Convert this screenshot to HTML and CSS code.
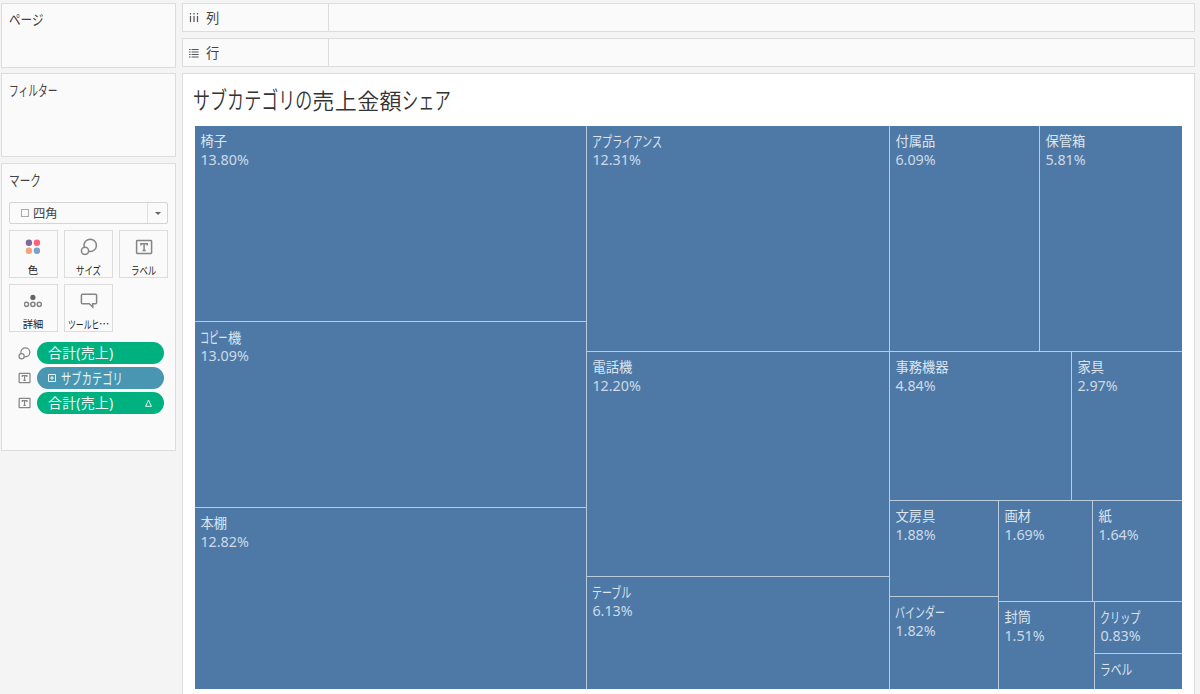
FILE: index.html
```html
<!DOCTYPE html>
<html lang="ja">
<head>
<meta charset="utf-8">
<title>サブカテゴリの売上金額シェア</title>
<link rel="stylesheet" href="styles.css">
</head>
<body>
<svg class="defs" width="0" height="0">
  <symbol id="size" viewBox="0 0 18 18"><circle cx="10.2" cy="7.4" r="6.2" /><circle class="mask" cx="5" cy="12.8" r="3.6"/></symbol>
  <symbol id="label" viewBox="0 0 18 16"><rect x="1.6" y="1.6" width="15" height="12.8" rx=".6"/><path d="M5.9 6.5V4.8H12.3V6.5M9.1 4.8V11.4M7.5 11.4H10.7"/></symbol>
</svg>
<aside class="cards">
  <section class="card pages"><h2><span class="k n3 pg">ページ</span></h2></section>
  <section class="card filters"><h2><span class="k n5 fl">フィルター</span></h2></section>
  <section class="card marks">
    <h2><span class="k n3 mk">マーク</span></h2>
    <div class="select"><i class="square"></i><span class="value">四角</span><span class="drop"><i></i></span></div>
    <div class="buttons">
      <div class="btn first"><svg width="18" height="18" viewBox="0 0 18 18"><g stroke="none"><circle cx="4.9" cy="4.8" r="3.2" fill="#7d6b99"/><circle cx="12.9" cy="4.8" r="3.2" fill="#f9647b"/><circle cx="4.9" cy="12.8" r="3.2" fill="#f7a277"/><circle cx="12.9" cy="12.8" r="3.2" fill="#78a1cc"/></g></svg><span>色</span></div>
      <div class="btn"><svg width="18" height="18"><use href="#size"/></svg><span class="k n3 bt">サイズ</span></div>
      <div class="btn"><svg width="18" height="18"><use href="#label"/></svg><span class="k n3 bt">ラベル</span></div>
      <div class="btn first"><svg width="18" height="18" viewBox="0 0 18 18"><circle cx="8.9" cy="5.4" r="2.6" fill="#666" stroke="none"/><circle cx="2.5" cy="12.3" r="2.1"/><circle cx="8.9" cy="12.3" r="2.1"/><circle cx="15.3" cy="12.3" r="2.1"/></svg><span>詳細</span></div>
      <div class="btn"><svg width="18" height="18" viewBox="0 0 18 18"><path d="M2.4 2.2H15.6Q16.6 2.2 16.6 3.2V10.8Q16.6 11.8 15.6 11.8H12.7V15L9.3 11.8H2.4Q1.4 11.8 1.4 10.8V3.2Q1.4 2.2 2.4 2.2Z"/></svg><span class="tip"><span class="k n4 tt">ツールヒ</span>⋯</span></div>
    </div>
    <div class="pills">
      <div class="row"><svg width="13" height="13"><use href="#size"/></svg><div class="pill green">合計(売上)</div></div>
      <div class="row"><svg width="13" height="12"><use href="#label"/></svg><div class="pill blue"><svg class="plus" width="8" height="8" viewBox="0 0 8 8"><path d="M.5.5H7.5V7.5H.5ZM4 2V6M2 4H6"/></svg><span class="k n6 pl">サブカテゴリ</span></div></div>
      <div class="row"><svg width="13" height="12"><use href="#label"/></svg><div class="pill green">合計(売上)<svg class="delta" width="9" height="9" viewBox="0 0 9 9"><path d="M4.5 1.2L7.4 7.3H1.6Z"/></svg></div></div>
    </div>
  </section>
</aside>
<main class="work">
  <div class="shelf"><div class="name"><svg width="10" height="10" viewBox="0 0 10 10"><path d="M1.5 0V1.6M5 0V1.6M8.5 0V1.6M1.5 3V9M5 3V9M8.5 3V9"/></svg>列</div></div>
  <div class="shelf"><div class="name"><svg width="10" height="10" viewBox="0 0 10 10"><path d="M0 1.5H1.6M0 4H1.6M0 6.5H1.6M0 9H1.6M2.6 1.5H9.6M2.6 4H9.6M2.6 6.5H9.6M2.6 9H9.6"/></svg>行</div></div>
  <section class="view">
    <h1><span class="k n7 t1">サブカテゴリの</span><span class="t2">売上金額</span><span class="k n3 t3">シェア</span></h1>
    <div class="treemap">
      <div class="col c1">
        <div class="cell"><b>椅子</b><em>13.80%</em></div>
        <div class="cell"><b class="mix"><span class="k n3 cp">コピー</span>機</b><em>13.09%</em></div>
        <div class="cell"><b>本棚</b><em>12.82%</em></div>
      </div>
      <div class="col c2">
        <div class="cell"><b class="k n7">アプライアンス</b><em>12.31%</em></div>
        <div class="cell"><b>電話機</b><em>12.20%</em></div>
        <div class="cell"><b class="k n4 tb">テーブル</b><em>6.13%</em></div>
      </div>
      <div class="col c3">
        <div class="line l1">
          <div class="cell"><b>付属品</b><em>6.09%</em></div>
          <div class="cell"><b>保管箱</b><em>5.81%</em></div>
        </div>
        <div class="line l2">
          <div class="cell"><b>事務機器</b><em>4.84%</em></div>
          <div class="cell"><b>家具</b><em>2.97%</em></div>
        </div>
        <div class="line l3">
          <div class="col c4">
            <div class="cell"><b>文房具</b><em>1.88%</em></div>
            <div class="cell"><b class="k n5 bd">バインダー</b><em>1.82%</em></div>
          </div>
          <div class="col c5">
            <div class="line l4">
              <div class="cell"><b>画材</b><em>1.69%</em></div>
              <div class="cell"><b>紙</b><em>1.64%</em></div>
            </div>
            <div class="line l5">
              <div class="cell"><b>封筒</b><em>1.51%</em></div>
              <div class="col c6">
                <div class="cell"><b class="k n4">クリップ</b><em>0.83%</em></div>
                <div class="cell"><b class="k n3 lb">ラベル</b></div>
              </div>
            </div>
          </div>
        </div>
      </div>
    </div>
  </section>
</main>
</body>
</html>
```
FILE: styles.css
```css
* { box-sizing: border-box; }
html, body { height: 100%; overflow: hidden; }
body { margin: 0; padding: 3px 5px 0 1px; display: flex; gap: 6px; background: #f4f4f4; color: #444; font: 13.3px/20px "Noto Sans", "Noto Sans CJK JP", sans-serif; }
h1, h2 { margin: 0; font-weight: 400; }
b, em { font-weight: 400; font-style: normal; display: block; }
svg { display: block; flex: none; fill: none; stroke: #858585; stroke-width: 1.5; }
.defs { position: absolute; }
.mask { fill: #fafafa; }

/* Condensed kana: --n glyphs, each --s wide relative to the surrounding text, drawn slightly taller */
.k { display: inline-block; --s: .76; font-size: 1.08em; width: calc(var(--n) * var(--s) * 1em / 1.08); white-space: nowrap; text-align: left; }
.k { transform: scaleX(calc(var(--s) / 1.08)); transform-origin: 0 50%; font-family: "Noto Sans CJK JP", sans-serif; }
.n3 { --n: 3; } .n4 { --n: 4; } .n5 { --n: 5; } .n6 { --n: 6; } .n7 { --n: 7; }
.pg { --s: .87; } .fl { --s: .73; } .mk { --s: .8; } .bt { --s: .82; } .tt { --s: .76; }
.pl { --s: .73; } .t1 { --s: .775; } .t3 { --s: .74; } .cp { --s: .69; } .tb { --s: .75; } .bd { --s: .75; } .lb { --s: .81; }

.cards { width: 175px; flex: none; display: flex; flex-direction: column; }
.card { background: #fafafa; border: 1px solid #dcdcdc; padding: 6px 7px 0; }
.card h2 { font-size: 13.3px; line-height: 20px; height: 20px; }
.pages { height: 65px; margin-bottom: 5px; padding-top: 5px; }
.filters { height: 84px; margin-bottom: 6px; }
.marks { height: 288px; }
.select { margin-top: 12px; width: 159px; height: 22px; border: 1px solid #d4d4d4; border-radius: 2px; display: flex; align-items: center; padding-left: 11px; font-size: 12.3px; }
.square { width: 8px; height: 8px; border: 1px solid #aaa; margin-right: 4px; }
.value { flex: 1; padding-top: 1px; }
.drop { width: 20px; height: 20px; border-left: 1px solid #dedede; display: grid; place-items: center; }
.drop i { border: 3px solid transparent; border-top: 3px solid #666; border-bottom: 0; }
.buttons { margin-top: 6px; display: grid; grid-template-columns: repeat(3, 49px); gap: 6px; }
.btn { height: 48px; border: 1px solid #dcdcdc; display: flex; flex-direction: column; align-items: center; padding: 7px 0 0; font-size: 10.3px; line-height: 14px; gap: 7px; color: #222; white-space: nowrap; }
.first { padding-right: 1px; }
.tip { display: flex; }
.pills { margin-top: 10px; display: flex; flex-direction: column; gap: 3px; }
.row { display: flex; align-items: center; gap: 6px; padding-left: 9px; }
.row > svg { stroke-width: 1.7; }
.pill { width: 127px; flex: none; height: 22px; border-radius: 11px; color: #e8f7f2; padding: 0 11px; display: flex; align-items: center; font-size: 14px; letter-spacing: .15px; }
.green { background: #00b180; }
.blue { background: #4996b2; }
.pill svg { stroke: #e8f7f2; stroke-width: 1; }
.plus { margin-right: 5px; }
.pl { margin-top: -2px; }
.delta { margin-left: auto; }

.work { flex: 1; display: flex; flex-direction: column; gap: 6px; }
.shelf { height: 29px; flex: none; background: #fafafa; border: 1px solid #dcdcdc; }
.name { width: 146px; height: 100%; border-right: 1px solid #dcdcdc; display: flex; align-items: center; gap: 7px; padding-left: 6px; }
.name svg { stroke: #555; stroke-width: 1.2; }
.view { flex: 1; background: #fff; border: 1px solid #dcdcdc; border-bottom: 0; padding: 8px 12px 0; }
h1 { font-size: 22px; line-height: 34px; height: 44px; margin-left: -2px; color: #333; font-family: "Noto Sans CJK JP", sans-serif; font-weight: 350; display: flex; }
.t2 { letter-spacing: .4px; }
.treemap { width: 987px; height: 563px; display: grid; grid-template-columns: 391px 302px 1fr; gap: 1px; background: #bccbdc; }
.col, .line { display: grid; gap: 1px; min-width: 0; min-height: 0; }
.c1 { grid-template-rows: 195px 185px 1fr; }
.c2 { grid-template-rows: 225px 224px 1fr; }
.c3 { grid-template-rows: 225px 148px 1fr; }
.l1 { grid-template-columns: 149px 1fr; }
.l2 { grid-template-columns: 181px 1fr; }
.l3 { grid-template-columns: 108px 1fr; }
.c4 { grid-template-rows: 95px 1fr; }
.c5 { grid-template-rows: 100px 1fr; }
.l4 { grid-template-columns: 93px 1fr; }
.l5 { grid-template-columns: 95px 1fr; }
.c6 { grid-template-rows: 51px 1fr; }
.cell { min-width: 0; min-height: 0; background: #4e79a7; color: #dce5ee; padding: 6px 0 0 5.4px; line-height: 19px; overflow: hidden; }
.cell b { height: 18px; }
.cell em { font-size: 14.3px; color: #cdd9e6; }
.cell b.k, .cell .mix { display: block; margin-top: -1px; margin-bottom: 1px; }
```
